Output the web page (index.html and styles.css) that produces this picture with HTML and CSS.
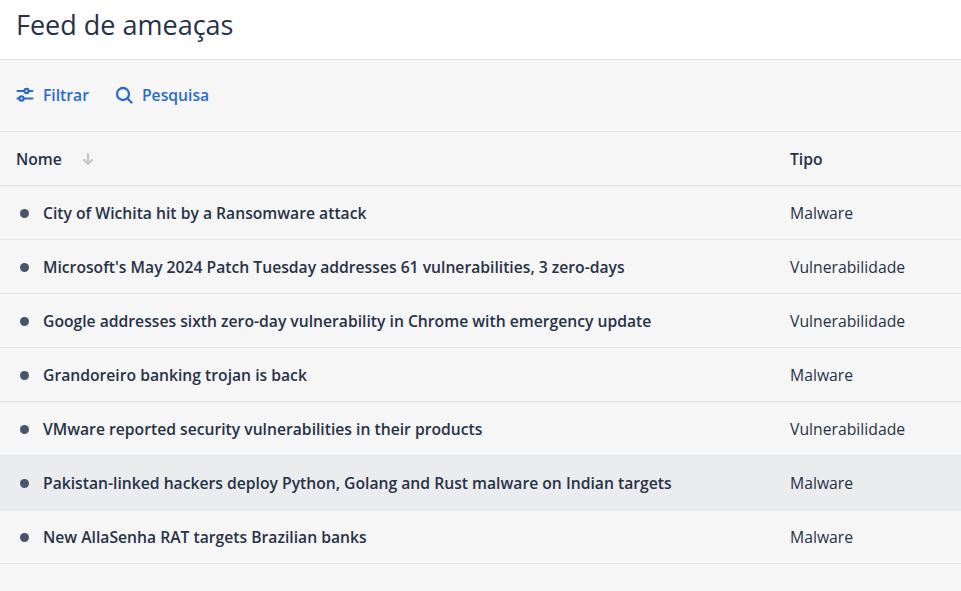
FILE: index.html
```html
<!DOCTYPE html>
<html lang="pt">
<head>
<meta charset="utf-8">
<title>Feed de ameaças</title>
<link rel="stylesheet" href="styles.css">
</head>
<body>
<header class="header"><h1 class="title">Feed de ameaças</h1></header>
<div class="toolbar">
  <a class="tool">
    <svg class="icon" width="18" height="18" viewBox="0 0 18 18" fill="none" stroke="#2b6cc9" stroke-width="2.200" stroke-linecap="round"><path d="M1.500 5h6.500M13 5h3.500M1.500 12.500h1.500M8 12.500h8.500"/><circle cx="10.500" cy="5" r="2.100"/><circle cx="5.500" cy="12.500" r="2.100"/></svg>
    Filtrar
  </a>
  <a class="tool">
    <svg class="icon" width="18" height="18" viewBox="0 0 18 18" fill="none" stroke="#2b6cc9" stroke-width="2.300" stroke-linecap="round"><circle cx="8" cy="8" r="6"/><path d="M12.500 12.500L16.500 16.500"/></svg>
    Pesquisa
  </a>
</div>
<div class="row head">
  <div class="name-head">Nome
    <svg class="sort" width="12" height="14" viewBox="0 0 12 14" fill="none" stroke="#c6c8cc" stroke-width="2.200" stroke-linecap="round" stroke-linejoin="round"><path d="M6 2v10M2 8l4 4 4-4"/></svg>
  </div>
  <div class="type-head">Tipo</div>
</div>
<div class="row item"><div class="name"><span class="dot"></span>City of Wichita hit by a Ransomware attack</div><div class="type">Malware</div></div>
<div class="row item"><div class="name"><span class="dot"></span>Microsoft's May 2024 Patch Tuesday addresses 61 vulnerabilities, 3 zero-days</div><div class="type">Vulnerabilidade</div></div>
<div class="row item"><div class="name"><span class="dot"></span>Google addresses sixth zero-day vulnerability in Chrome with emergency update</div><div class="type">Vulnerabilidade</div></div>
<div class="row item"><div class="name"><span class="dot"></span>Grandoreiro banking trojan is back</div><div class="type">Malware</div></div>
<div class="row item"><div class="name"><span class="dot"></span>VMware reported security vulnerabilities in their products</div><div class="type">Vulnerabilidade</div></div>
<div class="row item hover"><div class="name"><span class="dot"></span>Pakistan-linked hackers deploy Python, Golang and Rust malware on Indian targets</div><div class="type">Malware</div></div>
<div class="row item"><div class="name"><span class="dot"></span>New AllaSenha RAT targets Brazilian banks</div><div class="type">Malware</div></div>
</body>
</html>
```
FILE: styles.css
```css
html, body {
  margin: 0;
  padding: 0;
  height: 100%;
  overflow: hidden;
}
body {
  background: #f6f6f6;
  color: #263248;
  font-family: "Open Sans", "Noto Sans", sans-serif;
  font-size: 15.7px;
}
.header {
  height: 59px;
  background: #fff;
  border-bottom: 1px solid #e2e3e5;
  padding-left: 16px;
}
.title {
  margin: 0;
  font-size: 27px;
  font-weight: 400;
  line-height: 49px;
}
.toolbar {
  height: 72px;
  box-sizing: border-box;
  border-bottom: 1px solid #e2e3e5;
  display: flex;
  align-items: center;
  gap: 26px;
  padding-left: 16px;
  padding-bottom: 2px;
}
.tool {
  display: flex;
  align-items: center;
  gap: 9px;
  color: #2b6cc9;
  font-weight: 600;
}
.row {
  height: 53px;
  border-bottom: 1px solid #e2e3e5;
  display: flex;
  align-items: center;
  padding-left: 16px;
}
.name-head {
  width: 774px;
  font-weight: 600;
  display: flex;
  align-items: center;
  gap: 20px;
}
.type-head { font-weight: 600; }
.name {
  width: 774px;
  display: flex;
  align-items: center;
  font-weight: 600;
}
.dot {
  width: 9px;
  height: 9px;
  border-radius: 50%;
  background: #465569;
  margin: 1px 14px 0 4px;
}
.type { font-weight: 400; font-size: 15.75px; }
.hover { background: #ebecee; }
```
